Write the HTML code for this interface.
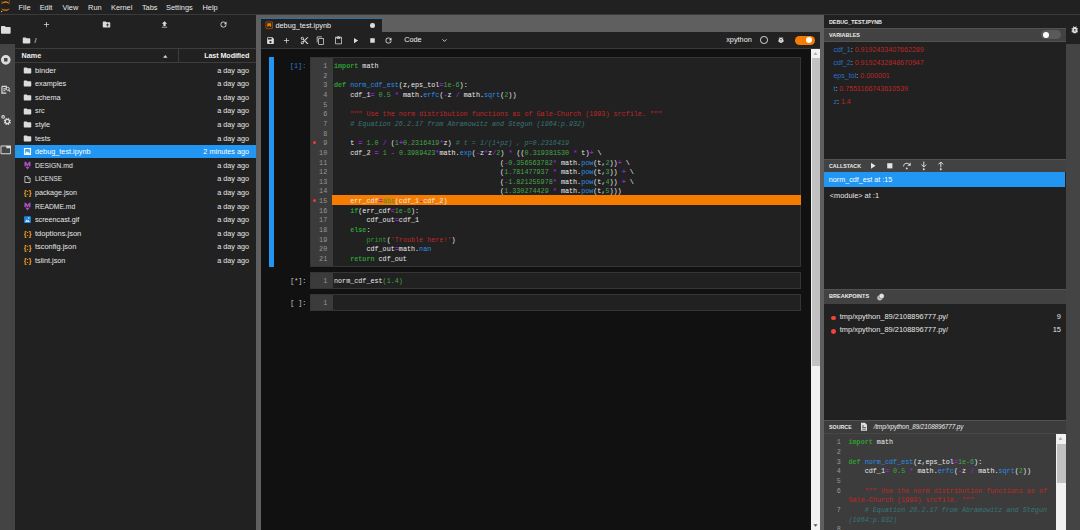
<!DOCTYPE html>
<html><head><meta charset="utf-8"><title>JupyterLab</title>
<style>
*{box-sizing:border-box;margin:0;padding:0}
html,body{width:1080px;height:530px;overflow:hidden;background:#212121}
body{position:relative;font-family:"Liberation Sans",sans-serif;font-size:7.3px;color:#e6e6e6;line-height:1}
.abs{position:absolute}
/* menu */
#menubar{position:absolute;left:0;top:0;width:1080px;height:14.6px;background:#212121;border-bottom:1px solid #3a3a3a}
#menubar span{position:absolute;top:3.7px;font-size:7.4px;color:#e8e8e8;white-space:nowrap}
/* left sidebar */
#lside{position:absolute;left:0;top:14.6px;width:14.7px;height:516px;background:#444}
#lside .act{position:absolute;left:0;top:0;width:14.7px;height:29px;background:#212121}
#lside svg{position:absolute;left:-0.3px;width:11.6px;height:11.6px}
/* file browser */
#fb{position:absolute;left:15px;top:14.6px;width:241.6px;height:516px;background:#212121}
#fb .tb svg{position:absolute;top:5.2px;width:9px;height:9px}
.hline{position:absolute;left:0;height:1px;background:#3d3d3d;width:241.6px}
.fr{position:absolute;left:14.7px;width:241.9px;height:13.6px;}
.fr.sel{background:#2196f3;color:#fff}
.fr .fi{position:absolute;left:8.1px;top:2.9px;width:9px;height:9px}
.fr .fn{position:absolute;left:20.3px;top:3.7px;white-space:nowrap;font-size:7.3px;transform-origin:0 50%}
.fr .fm{position:absolute;right:7.4px;top:3.7px;white-space:nowrap;font-size:7.3px}
.rundot{position:absolute;left:2.8px;top:6.6px;width:1.8px;height:1.8px;border-radius:50%;background:#4caf50}
/* main */
#main{position:absolute;left:256.3px;top:14.6px;width:568px;height:516px;background:#5f5f5f}
#tab{position:absolute;left:4.5px;top:3.6px;width:121px;height:14px;background:#212121;border-top:1px solid #2f72a8}
#toolbar{position:absolute;left:4.5px;top:17.4px;width:559.2px;height:17.2px;background:#212121;border-bottom:1px solid #3a3a3a}
#toolbar svg{position:absolute;top:3.9px;width:9px;height:9px}
#nb{position:absolute;left:4.5px;top:34.6px;width:559.2px;height:483px;background:#111}
.cell{position:absolute;background:#212121;border:1px solid #353535}
.gut{position:absolute;left:0;top:0;bottom:0;background:#3b3b3b}
.prompt{position:absolute;font-family:"Liberation Mono",monospace;font-size:6.75px;white-space:pre}
.ln,.cl,.sln,.scl{position:absolute;font-family:"Liberation Mono",monospace;font-size:6.75px;line-height:9.6px;height:9.6px;white-space:pre}
.ln{left:309.2px;width:18px;text-align:right;color:#979797}
.cl{left:334px;color:#ececec}
.hl{position:absolute;left:332.4px;width:468.400px;height:9.6px;background:#f57c00}
.bp{position:absolute;left:313px;width:3.2px;height:3.2px;border-radius:50%;background:#f03a36}
.k{color:#2e9b33;font-weight:bold}
.d{color:#2a8fe6}
.n{color:#43a64a}
.o{color:#8a28cc;font-weight:bold}
.s{color:#c02626}
.c{color:#357676;font-style:italic}
.p{color:#2a8fe6}
.b{color:#2e9b33}
/* scrollbar */
.sb{position:absolute;background:#f1f1f1}
.sb .th{position:absolute;left:1.2px;right:0;background:#c1c1c1}
/* right */
#right{position:absolute;left:824.4px;top:14.6px;width:241.4px;height:516px;background:#212121}
.ph{position:absolute;left:0;width:241.4px;background:#424242;border-top:1px solid #525252}
.ph b,.pt{position:absolute;left:4.8px;font-size:6.1px;font-weight:bold;color:#ececec;white-space:nowrap;transform-origin:0 50%;transform:scaleX(.87)}
.ph svg{position:absolute;width:9.6px;height:9.6px}
.var{position:absolute;left:9px;white-space:nowrap;font-size:7.1px;color:#e0e0e0}
.var i{font-style:normal;color:#2672c8}
.var u{text-decoration:none;color:#bf2626}
#rside{position:absolute;left:1065.6px;top:14.6px;width:14.6px;height:516px;background:#444}
#rside .act{position:absolute;left:0;top:0;width:15px;height:29px;background:#212121}
.sln{left:824.8px;width:16px;text-align:right;color:#9a9a9a}
.scl{left:848.5px;color:#ececec}

</style></head>
<body>
<div id="menubar">
<svg class="abs" style="left:0;top:0;width:11px;height:13px" viewBox="0 0 22 26"><path fill="#f57c00" d="M2 8.5C4 4.5 7.5 2.6 11 2.6s7 1.9 9 5.9c-2.6-2.2-5.6-3.2-9-3.2S4.600 6.300 2 8.500z"/><path fill="#f57c00" transform="translate(0 -1.2)" d="M2 17c2 4 5.500 5.900 9 5.900s7-1.900 9-5.900c-2.600 2.200-5.600 3.200-9 3.200S4.600 19.200 2 17z"/><circle cx="3.300" cy="23" r="1.300" fill="#ccc"/><circle cx="18.500" cy="2.200" r="1" fill="#bbb"/><circle cx="2.600" cy="3.500" r="0.800" fill="#bbb"/></svg>
<span style="left:18.6px">File</span><span style="left:39.7px">Edit</span><span style="left:62.4px">View</span><span style="left:88.1px">Run</span><span style="left:111px">Kernel</span><span style="left:141.9px">Tabs</span><span style="left:166px">Settings</span><span style="left:202.5px">Help</span>
</div>

<div id="lside"><div class="act"></div>
<svg style="top:9.5px" viewBox="0 0 24 24"><path fill="#dcdcdc" d="M10 4H4c-1.100 0-2 .900-2 2v12c0 1.100.9 2 2 2h16c1.100 0 2-.9 2-2V8c0-1.100-.900-2-2-2h-8l-2-2z"/></svg>
<svg style="top:39px" viewBox="0 0 24 24"><path fill="#dcdcdc" fill-rule="evenodd" d="M12 2a10 10 0 100 20 10 10 0 000-20zM8.500 8.500h7v7h-7z"/></svg>
<svg style="top:69.300px" viewBox="0 0 24 24"><path fill="none" stroke="#dcdcdc" stroke-width="2.400" d="M4 5h9v4M4 5v14h9M7 10h5M7 14h4"/><circle cx="16" cy="10" r="3.200" fill="none" stroke="#dcdcdc" stroke-width="2"/><path stroke="#dcdcdc" stroke-width="2.400" d="M18 12.500l3 3.500"/></svg>
<svg style="top:99.300px" viewBox="0 0 24 24"><circle cx="6.5" cy="6" r="2.700" fill="none" stroke="#dcdcdc" stroke-width="2.200"/><circle cx="15.2" cy="15.6" r="4.300" fill="none" stroke="#dcdcdc" stroke-width="2.600"/><path stroke="#dcdcdc" stroke-width="2.800" d="M19.45 17.36L22.04 18.43M16.96 19.85L18.03 22.44M13.44 19.85L12.37 22.44M10.95 17.36L8.36 18.43M10.95 13.84L8.36 12.77M13.44 11.35L12.37 8.76M16.96 11.35L18.03 8.76M19.45 13.84L22.04 12.77"/></svg>
<svg style="top:129.200px" viewBox="0 0 24 24"><path fill="#dcdcdc" fill-rule="evenodd" d="M21 3H3a2 2 0 00-2 2v14a2 2 0 002 2h18a2 2 0 002-2V5a2 2 0 00-2-2zm0 16H3V5h10v4h8v10z"/></svg>
</div>

<div id="fb">
<div class="tb">
<svg style="left:26.900px" viewBox="0 0 24 24"><path fill="#dcdcdc" d="M19 13h-6v6h-2v-6H5v-2h6V5h2v6h6v2z"/></svg>
<svg style="left:86.500px" viewBox="0 0 24 24"><path fill="#dcdcdc" fill-rule="evenodd" d="M20 6h-8l-2-2H4c-1.100 0-2 .900-2 2v12c0 1.100.900 2 2 2h16c1.100 0 2-.900 2-2V8c0-1.100-.900-2-2-2zm-1 8h-3v3h-2v-3h-3v-2h3V9h2v3h3v2z"/></svg>
<svg style="left:145.300px" viewBox="0 0 24 24"><path fill="#dcdcdc" d="M9 16h6v-6h4l-7-7-7 7h4zm-4 2h14v2H5z"/></svg>
<svg style="left:204.100px" viewBox="0 0 24 24"><path fill="#dcdcdc" d="M17.650 6.350A7.960 7.960 0 0012 4a8 8 0 108 8h-2a6 6 0 11-6-6c1.660 0 3.140.690 4.220 1.780L13 11h7V4l-2.350 2.350z"/></svg>
</div>
<svg class="abs" style="left:7px;top:21.600px;width:9px;height:9px" viewBox="0 0 24 24"><path fill="#dcdcdc" d="M10 4H4c-1.100 0-2 .900-2 2v12c0 1.100.9 2 2 2h16c1.100 0 2-.9 2-2V8c0-1.100-.900-2-2-2h-8l-2-2z"/></svg>
<span class="abs" style="left:19.500px;top:22.400px;font-size:7.300px">/</span>
<div class="hline" style="top:33px"></div>
<span class="abs" style="left:6.600px;top:37.300px;font-weight:bold;font-size:7.200px;color:#f0f0f0">Name</span>
<svg class="abs" style="left:147.200px;top:38px;width:6.600px;height:6.600px" viewBox="0 0 12 12"><path fill="#dcdcdc" d="M2 8.500l4-5 4 5z"/></svg>
<div class="abs" style="left:163.200px;top:34px;width:1px;height:13.500px;background:#3d3d3d"></div>
<span class="abs" style="right:7.400px;top:37.300px;font-weight:bold;font-size:7.200px;color:#f0f0f0;letter-spacing:-0.100px">Last Modified</span>
<div class="hline" style="top:47.500px"></div>
</div>
<div class="fr" style="top:63.00px"><svg class="fi" viewBox="0 0 24 24"><path fill="#dcdcdc" d="M10 4H4c-1.1 0-2 .9-2 2v12c0 1.1.9 2 2 2h16c1.1 0 2-.9 2-2V8c0-1.1-.9-2-2-2h-8l-2-2z"/></svg><span class="fn" style="transform:scaleX(1.04)">binder</span><span class="fm">a day ago</span></div><div class="fr" style="top:76.60px"><svg class="fi" viewBox="0 0 24 24"><path fill="#dcdcdc" d="M10 4H4c-1.1 0-2 .9-2 2v12c0 1.1.9 2 2 2h16c1.1 0 2-.9 2-2V8c0-1.1-.9-2-2-2h-8l-2-2z"/></svg><span class="fn" style="transform:scaleX(1)">examples</span><span class="fm">a day ago</span></div><div class="fr" style="top:90.20px"><svg class="fi" viewBox="0 0 24 24"><path fill="#dcdcdc" d="M10 4H4c-1.1 0-2 .9-2 2v12c0 1.1.9 2 2 2h16c1.1 0 2-.9 2-2V8c0-1.1-.9-2-2-2h-8l-2-2z"/></svg><span class="fn" style="transform:scaleX(1)">schema</span><span class="fm">a day ago</span></div><div class="fr" style="top:103.80px"><svg class="fi" viewBox="0 0 24 24"><path fill="#dcdcdc" d="M10 4H4c-1.1 0-2 .9-2 2v12c0 1.1.9 2 2 2h16c1.1 0 2-.9 2-2V8c0-1.1-.9-2-2-2h-8l-2-2z"/></svg><span class="fn" style="transform:scaleX(1)">src</span><span class="fm">a day ago</span></div><div class="fr" style="top:117.40px"><svg class="fi" viewBox="0 0 24 24"><path fill="#dcdcdc" d="M10 4H4c-1.1 0-2 .9-2 2v12c0 1.1.9 2 2 2h16c1.1 0 2-.9 2-2V8c0-1.1-.9-2-2-2h-8l-2-2z"/></svg><span class="fn" style="transform:scaleX(1)">style</span><span class="fm">a day ago</span></div><div class="fr" style="top:131.00px"><svg class="fi" viewBox="0 0 24 24"><path fill="#dcdcdc" d="M10 4H4c-1.1 0-2 .9-2 2v12c0 1.1.9 2 2 2h16c1.1 0 2-.9 2-2V8c0-1.1-.9-2-2-2h-8l-2-2z"/></svg><span class="fn" style="transform:scaleX(1)">tests</span><span class="fm">a day ago</span></div><div class="fr sel" style="top:144.60px"><div class="rundot"></div><svg class="fi" viewBox="0 0 24 24"><rect x="2.500" y="2.500" width="19" height="19" rx="1.500" fill="#fff"/><rect x="5.500" y="5.500" width="13" height="13" fill="#42a5f5"/><path fill="#fff" d="M5.500 18.500l4.500-7.500 3.500 4.500 2-2.500 3 5.500z"/></svg><span class="fn" style="transform:scaleX(1)">debug_test.ipynb</span><span class="fm">2 minutes ago</span></div><div class="fr" style="top:158.20px"><svg class="fi" viewBox="0 0 24 24"><path fill="#b04fc4" d="M4 2h4l4 6 4-6h4v12h-4V9l-4 5.500L8 9v5H4z"/><path fill="#b04fc4" d="M6.500 15h11l-5.500 7.500z"/></svg><span class="fn" style="transform:scaleX(0.94)">DESIGN.md</span><span class="fm">a day ago</span></div><div class="fr" style="top:171.80px"><svg class="fi" viewBox="0 0 24 24"><path fill="none" stroke="#cfcfcf" stroke-width="2.2" d="M5 4h9l5 5v11H5z"/><path fill="none" stroke="#cfcfcf" stroke-width="2" d="M13 4v6h6"/></svg><span class="fn" style="transform:scaleX(0.86)">LICENSE</span><span class="fm">a day ago</span></div><div class="fr" style="top:185.40px"><svg class="fi" viewBox="0 0 24 24"><text x="12" y="18" text-anchor="middle" font-family="Liberation Sans, sans-serif" font-weight="bold" font-size="18.5" fill="#f9a825">{:}</text></svg><span class="fn" style="transform:scaleX(0.977)">package.json</span><span class="fm">a day ago</span></div><div class="fr" style="top:199.00px"><svg class="fi" viewBox="0 0 24 24"><path fill="#b04fc4" d="M4 2h4l4 6 4-6h4v12h-4V9l-4 5.500L8 9v5H4z"/><path fill="#b04fc4" d="M6.500 15h11l-5.500 7.500z"/></svg><span class="fn" style="transform:scaleX(0.927)">README.md</span><span class="fm">a day ago</span></div><div class="fr" style="top:212.60px"><svg class="fi" viewBox="0 0 24 24"><rect x="3" y="3" width="18" height="18" rx="1.5" fill="#1e88e5"/><path fill="#fff" d="M6 18l4-6 3 4 2-2.5 3 4.5z"/><circle cx="15.5" cy="8" r="1.8" fill="#fff"/></svg><span class="fn" style="transform:scaleX(0.985)">screencast.gif</span><span class="fm">a day ago</span></div><div class="fr" style="top:226.20px"><svg class="fi" viewBox="0 0 24 24"><text x="12" y="18" text-anchor="middle" font-family="Liberation Sans, sans-serif" font-weight="bold" font-size="18.5" fill="#f9a825">{:}</text></svg><span class="fn" style="transform:scaleX(1.027)">tdoptions.json</span><span class="fm">a day ago</span></div><div class="fr" style="top:239.80px"><svg class="fi" viewBox="0 0 24 24"><text x="12" y="18" text-anchor="middle" font-family="Liberation Sans, sans-serif" font-weight="bold" font-size="18.5" fill="#f9a825">{:}</text></svg><span class="fn" style="transform:scaleX(1.018)">tsconfig.json</span><span class="fm">a day ago</span></div><div class="fr" style="top:253.40px"><svg class="fi" viewBox="0 0 24 24"><text x="12" y="18" text-anchor="middle" font-family="Liberation Sans, sans-serif" font-weight="bold" font-size="18.5" fill="#f9a825">{:}</text></svg><span class="fn" style="transform:scaleX(1)">tslint.json</span><span class="fm">a day ago</span></div>

<div id="main">
<div id="tab">
<svg class="abs" style="left:4px;top:2.200px;width:8.500px;height:8.500px" viewBox="0 0 24 24"><rect x="2.500" y="2.500" width="19" height="19" rx="1.500" fill="none" stroke="#b85e00" stroke-width="2"/><path fill="#f57c00" d="M6.500 6h11v11.500l-5.500-4-5.500 4z"/></svg>
<span class="abs" style="left:14.700px;top:3px;font-size:7.300px;color:#f0f0f0">debug_test.ipynb</span>
<div class="abs" style="left:109.500px;top:4.300px;width:4.600px;height:4.600px;border-radius:50%;background:#dcdcdc"></div>
</div>
<div id="toolbar">
<svg style="left:5.100px" viewBox="0 0 24 24"><path fill="#dcdcdc" fill-rule="evenodd" d="M17 3H5a2 2 0 00-2 2v14a2 2 0 002 2h14a2 2 0 002-2V7l-4-4zm-5 16a3 3 0 110-6 3 3 0 010 6zm3-10H5V5h10v4z"/></svg>
<svg style="left:21.700px" viewBox="0 0 24 24"><path fill="#dcdcdc" d="M19 13h-6v6h-2v-6H5v-2h6V5h2v6h6v2z"/></svg>
<svg style="left:39px" viewBox="0 0 24 24"><path fill="#dcdcdc" d="M9.640 7.640c.230-.500.360-1.050.360-1.640a4 4 0 10-4 4c.590 0 1.140-.130 1.640-.360L10 12l-2.360 2.360C7.140 14.130 6.590 14 6 14a4 4 0 104 4c0-.590-.130-1.140-.360-1.640L12 14l7 7h3v-1L9.640 7.640zM6 8a2 2 0 110-4 2 2 0 010 4zm0 12a2 2 0 110-4 2 2 0 010 4zm6-7.500a.500.500 0 110-1 .500.500 0 010 1zM19 3l-6 6 2 2 7-7V3z"/></svg>
<svg style="left:55.700px" viewBox="0 0 24 24"><path fill="#dcdcdc" d="M16 1H4a2 2 0 00-2 2v14h2V3h12V1zm3 4H8a2 2 0 00-2 2v14a2 2 0 002 2h11a2 2 0 002-2V7a2 2 0 00-2-2zm0 16H8V7h11v14z"/></svg>
<svg style="left:73px" viewBox="0 0 24 24"><path fill="#dcdcdc" d="M19 2h-4.180C14.400.840 13.300 0 12 0S9.600.840 9.180 2H5a2 2 0 00-2 2v16a2 2 0 002 2h14a2 2 0 002-2V4a2 2 0 00-2-2zm-7 0a1 1 0 110 2 1 1 0 010-2zm7 18H5V4h2v3h10V4h2v16z"/></svg>
<svg style="left:90px" viewBox="0 0 24 24"><path fill="#dcdcdc" d="M8 5v14l11-7z"/></svg>
<svg style="left:107.100px" viewBox="0 0 24 24"><path fill="#dcdcdc" d="M6 6h12v12H6z"/></svg>
<svg style="left:123.700px" viewBox="0 0 24 24"><path fill="#dcdcdc" d="M17.650 6.350A7.960 7.960 0 0012 4a8 8 0 108 8h-2a6 6 0 11-6-6c1.660 0 3.140.690 4.220 1.780L13 11h7V4l-2.350 2.350z"/></svg>
<span class="abs" style="left:143.400px;top:4.400px;font-size:7.300px;color:#f0f0f0">Code</span>
<svg style="left:180px;top:5px;width:7px;height:7px" viewBox="0 0 24 24"><path fill="none" stroke="#dcdcdc" stroke-width="3" d="M5 8l7 7 7-7"/></svg>
<span class="abs" style="left:465.400px;top:4.400px;font-size:7.300px;color:#f0f0f0">xpython</span>
<div class="abs" style="left:499.600px;top:4.300px;width:7.600px;height:7.600px;border-radius:50%;border:1px solid #dcdcdc"></div>
<svg style="left:516.700px;top:4.100px;width:8px;height:8px" viewBox="0 0 24 24"><path fill="#dcdcdc" d="M20 8h-2.810a6 6 0 00-1.820-1.960L17 4.410 15.590 3l-2.170 2.170a6 6 0 00-2.830 0L8.410 3 7 4.410l1.620 1.630C7.880 6.550 7.260 7.220 6.810 8H4v2h2.090c-.050.330-.090.660-.090 1v1H4v2h2v1c0 .340.040.670.090 1H4v2h2.810a6 6 0 0010.380 0H20v-2h-2.090c.050-.330.090-.660.090-1v-1h2v-2h-2v-1c0-.340-.040-.670-.090-1H20V8zm-6 8h-4v-2h4v2zm0-4h-4v-2h4v2z"/></svg>
<div class="abs" style="left:534px;top:3.600px;width:20.400px;height:9.200px;border-radius:4.600px;background:#f57c00"></div>
<div class="abs" style="left:545.300px;top:5px;width:6.400px;height:6.400px;border-radius:50%;background:#fff"></div>
</div>
<div id="nb"></div>
</div>

<!-- notebook cells (page coordinates) -->
<div class="abs" style="left:269px;top:57.200px;width:5px;height:209.400px;background:#2196f3"></div>
<div class="prompt" style="left:290px;top:63px;color:#2a7fd6">[1]:</div>
<div class="cell" style="left:310.400px;top:57.2px;width:490.900px;height:209.500px"><div class="gut" style="width:21.200px"></div></div>
<div class="ln" style="top:62.13px">1</div><div class="cl" style="top:62.13px"><span class="k">import</span> math</div><div class="ln" style="top:71.77px">2</div><div class="cl" style="top:71.77px"></div><div class="ln" style="top:81.41px">3</div><div class="cl" style="top:81.41px"><span class="k">def</span> <span class="d">norm_cdf_est</span>(z,eps_tol<span class="o">=</span><span class="n">1e-6</span>):</div><div class="ln" style="top:91.05px">4</div><div class="cl" style="top:91.05px">    cdf_1<span class="o">=</span> <span class="n">0.5</span> <span class="o">*</span> math.<span class="p">erfc</span>(<span class="o">-</span>z <span class="o">/</span> math.<span class="p">sqrt</span>(<span class="n">2</span>))</div><div class="ln" style="top:100.69px">5</div><div class="cl" style="top:100.69px"></div><div class="ln" style="top:110.33px">6</div><div class="cl" style="top:110.33px">    <span class="s">""" Use the norm distribution functions as of Gale-Church (1993) srcfile. """</span></div><div class="ln" style="top:119.97px">7</div><div class="cl" style="top:119.97px">    <span class="c"># Equation 26.2.17 from Abramowitz and Stegun (1964:p.932)</span></div><div class="ln" style="top:129.61px">8</div><div class="cl" style="top:129.61px"></div><div class="ln" style="top:139.25px">9</div><div class="cl" style="top:139.25px">    t <span class="o">=</span> <span class="n">1.0</span> <span class="o">/</span> (<span class="n">1</span><span class="o">+</span><span class="n">0.2316419</span><span class="o">*</span>z) <span class="c"># t = 1/(1+pz) , p=0.2316419</span></div><div class="bp" style="top:141.07px"></div><div class="ln" style="top:148.89px">10</div><div class="cl" style="top:148.89px">    cdf_2 <span class="o">=</span> <span class="n">1</span> <span class="o">-</span> <span class="n">0.3989423</span><span class="o">*</span>math.<span class="p">exp</span>(<span class="o">-</span>z<span class="o">*</span>z<span class="o">/</span><span class="n">2</span>) <span class="o">*</span> ((<span class="n">0.319381530</span> <span class="o">*</span> t)<span class="o">+</span> \</div><div class="ln" style="top:158.53px">11</div><div class="cl" style="top:158.53px">                                         (<span class="o">-</span><span class="n">0.356563782</span><span class="o">*</span> math.<span class="p">pow</span>(t,<span class="n">2</span>))<span class="o">+</span> \</div><div class="ln" style="top:168.17px">12</div><div class="cl" style="top:168.17px">                                         (<span class="n">1.781477937</span> <span class="o">*</span> math.<span class="p">pow</span>(t,<span class="n">3</span>)) <span class="o">+</span> \</div><div class="ln" style="top:177.81px">13</div><div class="cl" style="top:177.81px">                                         (<span class="o">-</span><span class="n">1.821255978</span><span class="o">*</span> math.<span class="p">pow</span>(t,<span class="n">4</span>)) <span class="o">+</span> \</div><div class="ln" style="top:187.45px">14</div><div class="cl" style="top:187.45px">                                         (<span class="n">1.330274429</span> <span class="o">*</span> math.<span class="p">pow</span>(t,<span class="n">5</span>)))</div><div class="hl" style="top:195.34px"></div><div class="ln" style="top:197.09px">15</div><div class="cl" style="top:197.09px">    err_cdf<span class="o">=</span><span class="b">abs</span>(cdf_1<span class="o">-</span>cdf_2)</div><div class="bp" style="top:198.91px"></div><div class="ln" style="top:206.73px">16</div><div class="cl" style="top:206.73px">    <span class="k">if</span>(err_cdf<span class="o">&lt;</span><span class="n">1e-6</span>):</div><div class="ln" style="top:216.37px">17</div><div class="cl" style="top:216.37px">        cdf_out<span class="o">=</span>cdf_1</div><div class="ln" style="top:226.01px">18</div><div class="cl" style="top:226.01px">    <span class="k">else</span>:</div><div class="ln" style="top:235.65px">19</div><div class="cl" style="top:235.65px">        <span class="b">print</span>(<span class="s">'Trouble here!'</span>)</div><div class="ln" style="top:245.29px">20</div><div class="cl" style="top:245.29px">        cdf_out<span class="o">=</span>math.<span class="p">nan</span></div><div class="ln" style="top:254.93px">21</div><div class="cl" style="top:254.93px">    <span class="k">return</span> cdf_out</div>
<div class="prompt" style="left:290.200px;top:277.900px;color:#d0d0d0">[*]:</div>
<div class="cell" style="left:310.400px;top:272.200px;width:490.900px;height:16.600px"><div class="gut" style="width:21.200px"></div></div>
<div class="ln" style="top:277px">1</div><div class="cl" style="top:277px">norm_cdf_est<span class="n">(1.4)</span></div>
<div class="prompt" style="left:290.200px;top:299.600px;color:#d0d0d0">[ ]:</div>
<div class="cell" style="left:310.400px;top:294.300px;width:490.900px;height:16.400px"><div class="gut" style="width:21.200px"></div></div>
<div class="ln" style="top:299.300px">1</div>

<!-- notebook scrollbar -->
<div class="sb" style="left:810.800px;top:48.600px;width:9.400px;height:481.400px"><div class="th" style="top:9.500px;height:307.600px"></div>
<svg class="abs" style="left:2px;top:2.500px;width:5px;height:5px" viewBox="0 0 10 10"><path fill="#a3a3a3" d="M1 7.500l4-5 4 5z"/></svg>
<svg class="abs" style="left:2px;bottom:2px;width:5px;height:5px" viewBox="0 0 10 10"><path fill="#505050" d="M1 2.500l4 5 4-5z"/></svg>
</div>

<div id="right">
<span class="pt" style="top:4.200px;font-size:6.200px;transform:scaleX(.86)">DEBUG_TEST.IPYNB</span>
<div class="ph" style="top:13.100px;height:14.100px;border-bottom:1px solid #525252"><b style="top:3.300px;transform:scaleX(.89)">VARIABLES</b>
<div class="abs" style="left:216.600px;top:1.700px;width:20px;height:8.600px;border-radius:4.300px;background:#5a5a5a"></div>
<div class="abs" style="left:218.300px;top:2.900px;width:6.200px;height:6.200px;border-radius:50%;background:#fff"></div>
</div>
<div class="var" style="top:32.600px"><i>cdf_1</i>: <u>0.9192433407662289</u></div>
<div class="var" style="top:45.600px"><i>cdf_2</i>: <u>0.9192432848670947</u></div>
<div class="var" style="top:58.600px"><i>eps_tol</i>: <u>0.000001</u></div>
<div class="var" style="top:71.600px"><i>t</i>: <u>0.7551166743610539</u></div>
<div class="var" style="top:84.500px"><i>z</i>: <u>1.4</u></div>

<div class="ph" style="top:144.300px;height:13px"><b style="top:2.700px">CALLSTACK</b>
<svg style="left:43.600px;top:1.300px" viewBox="0 0 24 24"><path fill="#e4e4e4" d="M7.500 4.500v15l11.500-7.500z"/></svg>
<svg style="left:60.500px;top:1.300px" viewBox="0 0 24 24"><path fill="#e4e4e4" d="M5.500 5.500h13v13h-13z"/></svg>
<svg style="left:77.800px;top:1.300px" viewBox="0 0 24 24"><path fill="none" stroke="#e4e4e4" stroke-width="2.200" d="M3.500 13.500a8.500 8.500 0 0116-3.500"/><path fill="#e4e4e4" d="M21.500 4v8h-8z"/><circle cx="12" cy="18.500" r="2.300" fill="#e4e4e4"/></svg>
<svg style="left:94.800px;top:1.300px" viewBox="0 0 24 24"><path fill="none" stroke="#e4e4e4" stroke-width="2.400" d="M12 1.500v13M6 9l6 6 6-6"/><circle cx="12" cy="20.800" r="2.400" fill="#e4e4e4"/></svg>
<svg style="left:111.600px;top:1.300px" viewBox="0 0 24 24"><path fill="none" stroke="#e4e4e4" stroke-width="2.400" d="M12 16V3M6 8.500l6-6 6 6"/><circle cx="12" cy="20.800" r="2.400" fill="#e4e4e4"/></svg>
</div>
<div class="abs" style="left:0;top:157.300px;width:241px;height:14.900px;background:#2196f3"></div>
<span class="abs" style="left:4.400px;top:161.700px;font-size:7.200px;color:#fff;white-space:nowrap">norm_cdf_est at :15</span>
<span class="abs" style="left:5.300px;top:177.300px;font-size:7.400px;color:#e6e6e6;white-space:nowrap">&lt;module&gt; at :1</span>

<div class="ph" style="top:274.600px;height:14.600px"><b style="top:3.300px;transform:scaleX(.905)">BREAKPOINTS</b>
<svg style="left:51.700px;top:1.800px" viewBox="0 0 24 24"><circle cx="9.500" cy="14.500" r="6.500" fill="#bdbdbd"/><circle cx="14" cy="10" r="6.500" fill="#e4e4e4" stroke="#424242" stroke-width="1"/></svg>
</div>
<div class="abs" style="left:6.700px;top:301px;width:4.800px;height:4.800px;border-radius:50%;background:#f44336"></div>
<span class="abs" style="left:15.400px;top:298.200px;font-size:7.450px;white-space:nowrap">tmp/xpython_89/2108896777.py/</span>
<span class="abs" style="right:4.800px;top:298.200px;font-size:7.400px">9</span>
<div class="abs" style="left:6.700px;top:314.600px;width:4.800px;height:4.800px;border-radius:50%;background:#f44336"></div>
<span class="abs" style="left:15.400px;top:311.900px;font-size:7.450px;white-space:nowrap">tmp/xpython_89/2108896777.py/</span>
<span class="abs" style="right:4.800px;top:311.900px;font-size:7.400px">15</span>

<div class="ph" style="top:405.300px;height:13.300px;background:#3c3c3c"><b style="top:3.500px">SOURCE</b>
<svg style="left:35px;top:1.500px" viewBox="0 0 24 24"><path fill="#dcdcdc" fill-rule="evenodd" d="M5 2h10l5 5v15H5zM8 9h4v2H8zm0 4h9v2H8zm0 4h9v2H8z"/></svg>
<span class="abs" style="left:49.400px;top:3.500px;font-size:6.350px;font-style:italic;color:#ececec;white-space:nowrap;letter-spacing:-0.100px">/tmp/xpython_89/2108896777.py</span>
</div>
<div class="abs" style="left:0;top:418.600px;width:241px;height:98px;background:#3c3c3c;border-top:1px solid #474747"></div>
</div>
<div class="sln" style="top:438.18px">1</div><div class="scl" style="top:438.18px"><span class="k">import</span> math</div><div class="sln" style="top:447.86px">2</div><div class="scl" style="top:447.86px"></div><div class="sln" style="top:457.54px">3</div><div class="scl" style="top:457.54px"><span class="k">def</span> <span class="d">norm_cdf_est</span>(z,eps_tol<span class="o">=</span><span class="n">1e-6</span>):</div><div class="sln" style="top:467.22px">4</div><div class="scl" style="top:467.22px">    cdf_1<span class="o">=</span> <span class="n">0.5</span> <span class="o">*</span> math.<span class="p">erfc</span>(<span class="o">-</span>z <span class="o">/</span> math.<span class="p">sqrt</span>(<span class="n">2</span>))</div><div class="sln" style="top:476.90px">5</div><div class="scl" style="top:476.90px"></div><div class="sln" style="top:486.58px">6</div><div class="scl" style="top:486.58px">    <span class="s">""" Use the norm distribution functions as of</span></div><div class="sln" style="top:496.26px"></div><div class="scl" style="top:496.26px"><span class="s">Gale-Church (1993) srcfile. """</span></div><div class="sln" style="top:505.94px">7</div><div class="scl" style="top:505.94px">    <span class="c"># Equation 26.2.17 from Abramowitz and Stegun</span></div><div class="sln" style="top:515.62px"></div><div class="scl" style="top:515.62px"><span class="c">(1964:p.932)</span></div><div class="sln" style="top:525.30px">8</div><div class="scl" style="top:525.30px"></div>
<div class="sb" style="left:1056.300px;top:433.600px;width:9.300px;height:96.800px"><div class="th" style="top:10px;height:39.300px"></div>
<svg class="abs" style="left:2.200px;top:2.500px;width:5px;height:5px" viewBox="0 0 10 10"><path fill="#a3a3a3" d="M1 7.500l4-5 4 5z"/></svg>
</div>

<div id="rside"><div class="act"></div>
<svg class="abs" style="left:4.500px;top:10.100px;width:9.500px;height:9.500px" viewBox="0 0 24 24"><path fill="#dcdcdc" d="M20 8h-2.810a6 6 0 00-1.820-1.960L17 4.410 15.590 3l-2.170 2.170a6 6 0 00-2.830 0L8.410 3 7 4.410l1.620 1.630C7.880 6.550 7.260 7.220 6.810 8H4v2h2.090c-.050.330-.090.660-.090 1v1H4v2h2v1c0 .340.040.670.090 1H4v2h2.810a6 6 0 0010.380 0H20v-2h-2.090c.050-.330.090-.660.090-1v-1h2v-2h-2v-1c0-.340-.040-.670-.090-1H20V8zm-6 8h-4v-2h4v2zm0-4h-4v-2h4v2z"/></svg>
</div>

</body></html>
